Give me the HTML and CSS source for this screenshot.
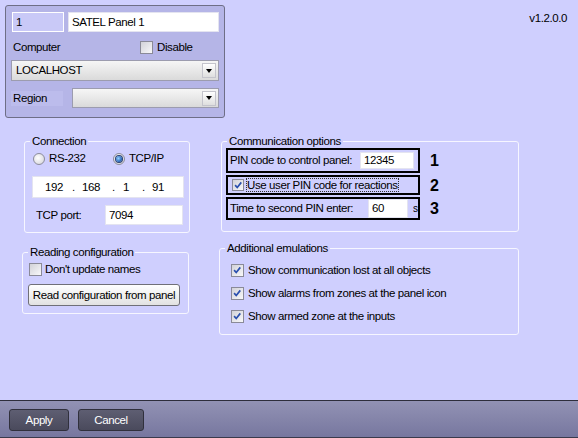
FILE: index.html
```html
<!DOCTYPE html>
<html>
<head>
<meta charset="utf-8">
<link rel="stylesheet" href="styles.css">
</head>
<body>
<div class="main">
  <div class="toprow">
    <div class="panel">
      <div class="r1">
        <div class="field dis">1</div>
        <div class="field name">SATEL Panel 1</div>
      </div>
      <div class="r2">
        <span class="lbl">Computer</span>
        <span class="cb"></span><span class="cbtext">Disable</span>
      </div>
      <div class="combo wide"><span class="ctext">LOCALHOST</span><span class="arrow"></span></div>
      <div class="r4">
        <span class="lblbox">Region</span>
        <div class="combo region"><span class="ctext"></span><span class="arrow"></span></div>
      </div>
    </div>
    <div class="version">v1.2.0.0</div>
  </div>

  <div class="groups">
    <div class="col left">
      <fieldset class="grp conn">
        <legend>Connection</legend>
        <div class="radios">
          <span class="ritem first"><span class="radio"></span><span class="rtext">RS-232</span></span>
          <span class="ritem"><span class="radio on"></span><span class="rtext">TCP/IP</span></span>
        </div>
        <div class="field ip">
          <span class="o1">192</span><span class="d1">.</span><span class="o2">168</span><span class="d2">.</span><span class="o3">1</span><span class="d3">.</span><span class="o4">91</span>
        </div>
        <div class="portrow">
          <span class="plabel">TCP port:</span>
          <div class="field port">7094</div>
        </div>
      </fieldset>

      <fieldset class="grp reading">
        <legend>Reading configuration</legend>
        <div class="crow rd"><span class="cb"></span><span class="cbtext">Don't update names</span></div>
        <div class="btn readbtn">Read configuration from panel</div>
      </fieldset>
    </div>

    <div class="col right">
      <fieldset class="grp comm">
        <legend>Communication options</legend>
        <div class="orow">
          <div class="obox b1">
            <span class="olabel">PIN code to control panel:</span>
            <div class="field pin">12345</div>
          </div>
          <span class="num">1</span>
        </div>
        <div class="orow">
          <div class="obox b2">
            <span class="cb on"><svg viewBox="0 0 13 13" width="11" height="11"><path d="M2.5 6 L5 8.8 L9.8 2.8" fill="none" stroke="#2a4fae" stroke-width="2"/></svg></span>
            <span class="focus">Use user PIN code for reactions</span>
          </div>
          <span class="num">2</span>
        </div>
        <div class="orow">
          <div class="obox b3">
            <span class="olabel">Time to second PIN enter:</span>
            <div class="field sec">60</div>
            <span class="unit">s</span>
          </div>
          <span class="num">3</span>
        </div>
      </fieldset>

      <fieldset class="grp emu">
        <legend>Additional emulations</legend>
        <div class="erow"><span class="cb on"><svg viewBox="0 0 13 13" width="11" height="11"><path d="M2.5 6 L5 8.8 L9.8 2.8" fill="none" stroke="#2a4fae" stroke-width="2"/></svg></span><span class="cbtext">Show communication lost at all objects</span></div>
        <div class="erow"><span class="cb on"><svg viewBox="0 0 13 13" width="11" height="11"><path d="M2.5 6 L5 8.8 L9.8 2.8" fill="none" stroke="#2a4fae" stroke-width="2"/></svg></span><span class="cbtext">Show alarms from zones at the panel icon</span></div>
        <div class="erow"><span class="cb on"><svg viewBox="0 0 13 13" width="11" height="11"><path d="M2.5 6 L5 8.8 L9.8 2.8" fill="none" stroke="#2a4fae" stroke-width="2"/></svg></span><span class="cbtext">Show armed zone at the inputs</span></div>
      </fieldset>
    </div>
  </div>
</div>
<div class="footer">
  <div class="fbtn apply">Apply</div>
  <div class="fbtn cancel">Cancel</div>
</div>
</body>
</html>
```
FILE: styles.css
```css
html, body {
  margin: 0;
  padding: 0;
}
body {
  width: 578px;
  height: 438px;
  overflow: hidden;
  background: #cfcffe;
  font-family: "Liberation Sans", Arial, sans-serif;
  font-size: 11.5px;
  letter-spacing: -0.4px;
  line-height: 15px;
  color: #000;
  white-space: nowrap;
}
.main {
  height: 400px;
}
.toprow {
  display: flex;
  padding: 5px 0 0 5px;
  height: 113px;
}
.panel {
  width: 220px;
  height: 113px;
  box-sizing: border-box;
  border: 1px solid #6e6e86;
  border-radius: 3px;
  background: #b5b5e7;
  padding: 6px 0 0 6px;
}
.r1 {
  display: flex;
  gap: 4px;
  height: 20px;
}
.field {
  box-sizing: border-box;
  background: #fff;
  border: 1px solid #e4e4f0;
  padding: 0 3px;
  display: flex;
  align-items: center;
}
.field.dis {
  width: 52px;
  height: 20px;
  background: #c9c9f7;
  border: 1px solid #fff;
}
.field.name {
  width: 151px;
  height: 20px;
}
.r2 {
  display: flex;
  align-items: center;
  margin-top: 8px;
  height: 15px;
}
.lbl {
  width: 127px;
  margin-left: 1px;
}
.cb {
  display: inline-flex;
  align-items: center;
  justify-content: center;
  width: 13px;
  height: 13px;
  box-sizing: border-box;
  border: 1px solid #8a8a98;
  background: linear-gradient(135deg, #d2d2d8, #f8f8fa);
  flex: none;
}
.cb svg {
  flex: none;
  display: block;
}
.cbtext {
  margin-left: 4px;
}
.combo {
  display: flex;
  align-items: center;
  box-sizing: border-box;
  border: 1px solid #9c9cae;
  background: linear-gradient(#f6f6f6, #dadada);
  padding: 0 2px 0 4px;
}
.combo.wide {
  margin-top: 5px;
  margin-left: -1px;
  width: 208px;
  height: 21px;
}
.ctext {
  flex: 1;
}
.arrow {
  width: 14px;
  height: 15px;
  box-sizing: border-box;
  border: 1px solid #c4c4cc;
  background: linear-gradient(#ffffff, #dedede);
  display: flex;
  align-items: center;
  justify-content: center;
}
.arrow::after {
  content: "";
  border-left: 3.5px solid transparent;
  border-right: 3.5px solid transparent;
  border-top: 4px solid #000;
}
.r4 {
  display: flex;
  align-items: center;
  margin-top: 7px;
  margin-left: -1px;
  height: 20px;
}
.lblbox {
  width: 52px;
  height: 15px;
  box-sizing: border-box;
  background: #bcbcec;
  padding-left: 2px;
  margin-right: 9px;
}
.combo.region {
  width: 147px;
  height: 20px;
}
.version {
  margin-left: auto;
  margin-right: 11px;
  margin-top: 6px;
}

.groups {
  display: flex;
  margin-top: 17px;
  padding-left: 22px;
}
.col {
  display: flex;
  flex-direction: column;
}
.col.left {
  width: 168px;
}
.col.right {
  width: 300px;
  margin-left: 29px;
}
.grp {
  margin: 0;
  padding: 0;
  min-width: 0;
  box-sizing: border-box;
  border: 1px solid #f6f6ff;
  border-radius: 3px;
}
.grp legend {
  margin-left: 5px;
  padding: 0 2px;
  line-height: 12px;
  height: 12px;
}
.conn {
  margin-left: 2px;
  width: 166px;
  height: 98px;
}
.radios {
  display: flex;
  align-items: center;
  margin-top: 4px;
  height: 15px;
  padding-left: 8px;
}
.ritem {
  display: flex;
  align-items: center;
}
.ritem.first {
  width: 80px;
}
.radio {
  width: 12px;
  height: 12px;
  box-sizing: border-box;
  border-radius: 50%;
  border: 1px solid #8c8c9c;
  background: radial-gradient(circle at 40% 40%, #ffffff, #cfcfd6);
  display: flex;
  align-items: center;
  justify-content: center;
}
.radio.on::after {
  content: "";
  width: 6px;
  height: 6px;
  border-radius: 50%;
  background: radial-gradient(circle at 40% 40%, #9ad4ff, #2a6cc0 60%, #10306a);
  box-shadow: 0 0 0 1px #2c3f70;
}
.rtext {
  margin-left: 4px;
}
.field.ip {
  margin-top: 10px;
  margin-left: 7px;
  width: 152px;
  height: 22px;
  padding-left: 12px;
}
.o1 { width: 27px; }
.d1 { width: 10px; }
.o2 { width: 30px; }
.d2 { width: 11px; }
.o3 { width: 19px; }
.d3 { width: 10px; }
.portrow {
  display: flex;
  align-items: center;
  margin-top: 7px;
  height: 20px;
  padding-left: 11px;
}
.plabel {
  width: 69px;
}
.field.port {
  width: 78px;
  height: 20px;
}
.reading {
  margin-top: 13px;
  width: 167px;
  height: 68px;
}
.crow {
  display: flex;
  align-items: center;
}
.crow.rd {
  margin-top: 4px;
  height: 15px;
  padding-left: 6px;
}
.crow.rd .cbtext {
  margin-left: 3px;
}
.btn {
  box-sizing: border-box;
  border: 1px solid #707078;
  border-radius: 3px;
  background: linear-gradient(#ffffff, #e2e2e2);
  display: flex;
  align-items: center;
  justify-content: center;
}
.readbtn {
  margin-top: 7px;
  margin-left: 5px;
  width: 152px;
  height: 22px;
}
.comm {
  margin-left: 2px;
  width: 298px;
  height: 97px;
}
.orow {
  display: flex;
  align-items: center;
  margin-left: 4px;
  margin-top: 2px;
}
.orow:first-of-type {
  margin-top: 1px;
}
.obox {
  width: 194px;
  box-sizing: border-box;
  border: 2px solid #000;
  display: flex;
  align-items: center;
}
.b1 {
  height: 25px;
  padding-left: 2px;
}
.b1 .olabel {
  width: 130px;
}
.field.pin {
  width: 54px;
  height: 17px;
}
.b2 {
  height: 20px;
  padding-left: 4px;
}
.b2 .cb {
  width: 12px;
  height: 12px;
}
.focus {
  margin-left: 2px;
  padding: 0 1px;
  outline: 1px dotted #333;
  outline-offset: -1px;
  line-height: 14px;
}
.b3 {
  height: 23px;
  padding-left: 2px;
}
.b3 .olabel {
  width: 138px;
}
.field.sec {
  width: 40px;
  height: 19px;
}
.unit {
  margin-left: 5px;
  font-size: 10px;
}
.num {
  margin-left: 10px;
  font-weight: bold;
  font-size: 16px;
  letter-spacing: 0;
}
.emu {
  margin-top: 10px;
  width: 300px;
  height: 93px;
  padding-top: 10px;
}
.erow {
  display: flex;
  align-items: center;
  height: 13px;
  margin-left: 11px;
  margin-bottom: 10px;
}
.footer {
  height: 38px;
  box-sizing: border-box;
  border-top: 1px solid #2e2e3c;
  border-bottom: 1px solid #3a3a4c;
  background: linear-gradient(#9292b4, #77779f);
  display: flex;
  padding: 8px 0 0 9px;
  gap: 9px;
}
.fbtn {
  height: 22px;
  box-sizing: border-box;
  border: 1px solid #30303c;
  border-radius: 3px;
  background: linear-gradient(#5e5e72, #4a4a5c);
  color: #fff;
  display: flex;
  align-items: center;
  justify-content: center;
}
.apply {
  width: 60px;
}
.cancel {
  width: 66px;
}
```
